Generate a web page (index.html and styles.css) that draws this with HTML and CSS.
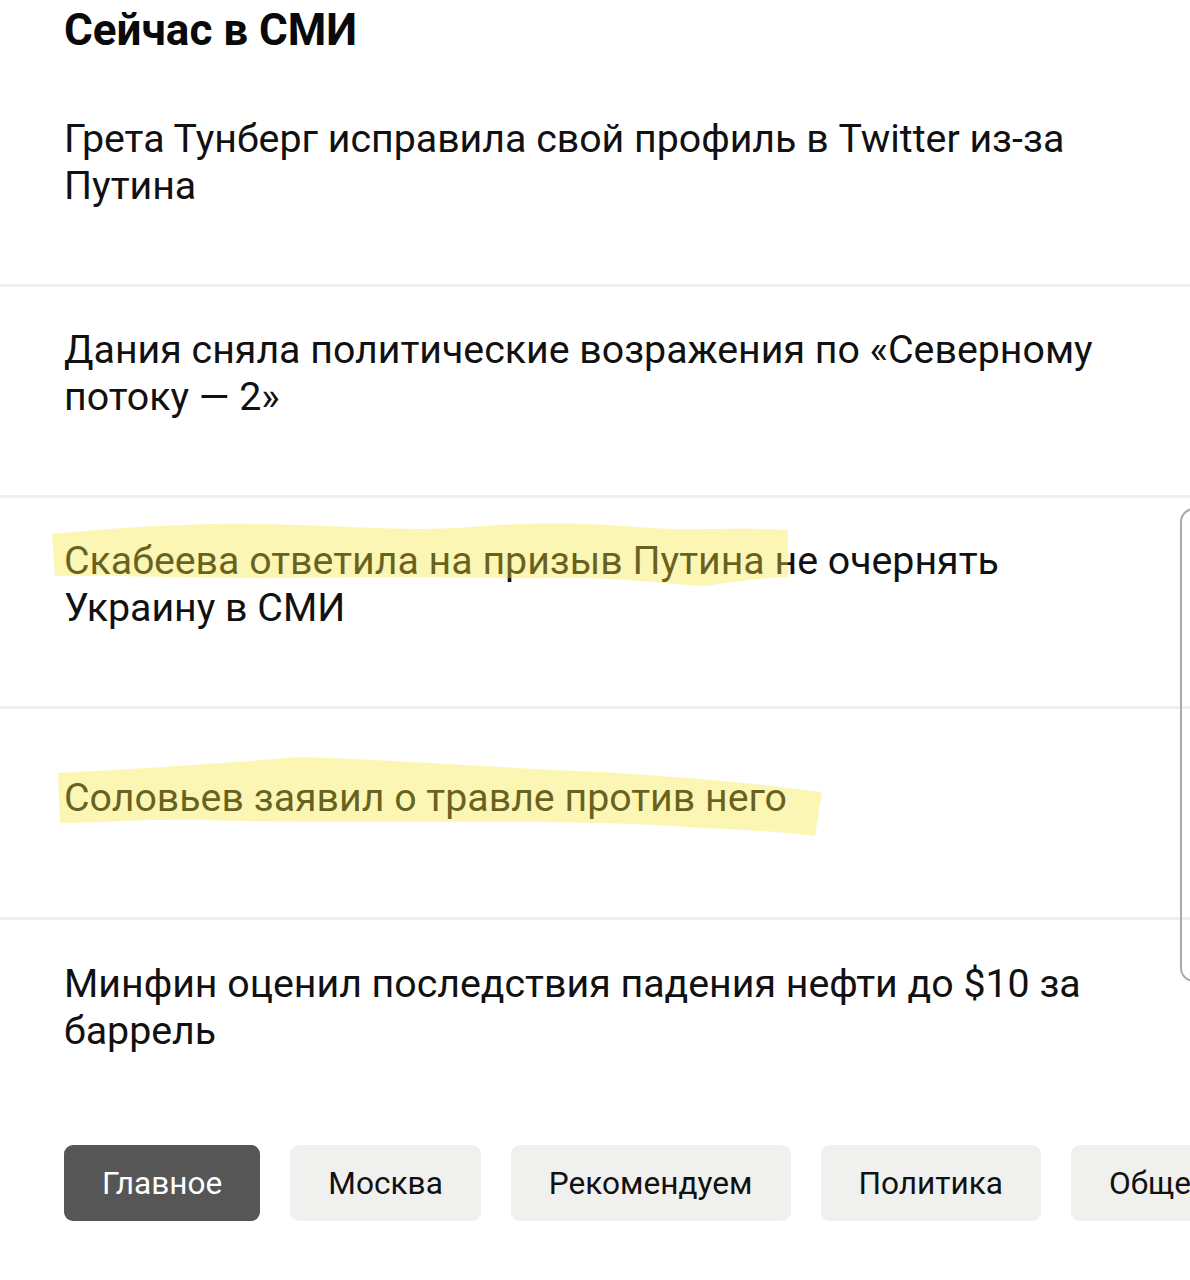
FILE: index.html
```html
<!DOCTYPE html>
<html lang="ru">
<head>
<meta charset="utf-8">
<link rel="stylesheet" href="styles.css">
</head>
<body>
<main class="page">
  <h1 class="title">Сейчас в СМИ</h1>
  <ul class="news">
    <li class="item"><a class="link">Грета Тунберг исправила свой профиль в Twitter из-за Путина</a></li>
    <li class="item"><a class="link">Дания сняла политические возражения по «Северному потоку — 2»</a></li>
    <li class="item"><a class="link">Скабеева ответила на призыв Путина не очернять Украину в СМИ</a></li>
    <li class="item item-single"><a class="link">Соловьев заявил о травле против него</a></li>
    <li class="item"><a class="link">Минфин оценил последствия падения нефти до $10 за баррель</a></li>
  </ul>
  <nav class="tabs">
    <span class="tab tab-active">Главное</span>
    <span class="tab">Москва</span>
    <span class="tab">Рекомендуем</span>
    <span class="tab">Политика</span>
    <span class="tab">Общество</span>
  </nav>
  <svg class="marks" width="1190" height="1280" viewBox="0 0 1190 1280" aria-hidden="true">
    <path class="mark" d="M52,534 C120,528 200,521 300,525 C380,528 420,531 470,527 C540,521 600,524 650,528 C700,531 740,527 788,530 L788,577 C760,578 740,581 705,586 C665,584 620,577 560,578 C500,579 400,576 300,578 C200,579 120,575 55,576 Z"/>
    <path class="mark" d="M58,773 C120,770 200,765 300,757 C400,760 500,768 600,772 C700,778 760,784 822,792 L815,836 C780,832 740,829 700,828 C650,824 600,822 500,822 C400,821 300,823 200,820 C140,819 100,823 60,823 Z"/>
  </svg>
  <div class="scroll-edge"></div>
</main>
</body>
</html>
```

FILE: styles.css
```css
html, body {
  margin: 0;
  padding: 0;
  background: #ffffff;
}

body {
  font-family: Roboto, "Noto Sans", "Liberation Sans", sans-serif;
  color: #111111;
  overflow: hidden;
}

.page {
  position: relative;
  width: 1190px;
  height: 1280px;
  overflow: hidden;
}

.title {
  margin: 0;
  height: 76px;
  padding: 0 64px;
  box-sizing: border-box;
  font-size: 44px;
  font-weight: 700;
  line-height: 60px;
  color: #0a0a0a;
}

.news {
  list-style: none;
  margin: 0;
  padding: 0;
}

.item {
  box-sizing: border-box;
  height: 211px;
  padding: 0 64px 35px;
  display: flex;
  align-items: center;
  border-bottom: 3px solid #efefef;
}

.item-single {
  padding-bottom: 29px;
}

.item:last-child {
  border-bottom: none;
}

.link {
  font-size: 39.3px;
  line-height: 47px;
  color: #111111;
  text-decoration: none;
}

.tabs {
  display: flex;
  gap: 30px;
  margin-top: 14px;
  padding-left: 64px;
  white-space: nowrap;
}

.tab {
  flex: none;
  display: flex;
  align-items: center;
  height: 76px;
  padding: 0 38px;
  border-radius: 9px;
  background: #f0f0ee;
  font-size: 31.6px;
  color: #111111;
}

.tab-active {
  background: #565656;
  color: #ffffff;
}

.marks {
  position: absolute;
  left: 0;
  top: 0;
  pointer-events: none;
}

.mark {
  fill: rgba(248, 232, 60, 0.38);
}

.scroll-edge {
  position: absolute;
  left: 1180px;
  top: 508px;
  width: 40px;
  height: 474px;
  border: 2px solid #a9a9a9;
  border-radius: 14px;
  box-sizing: border-box;
}
```
